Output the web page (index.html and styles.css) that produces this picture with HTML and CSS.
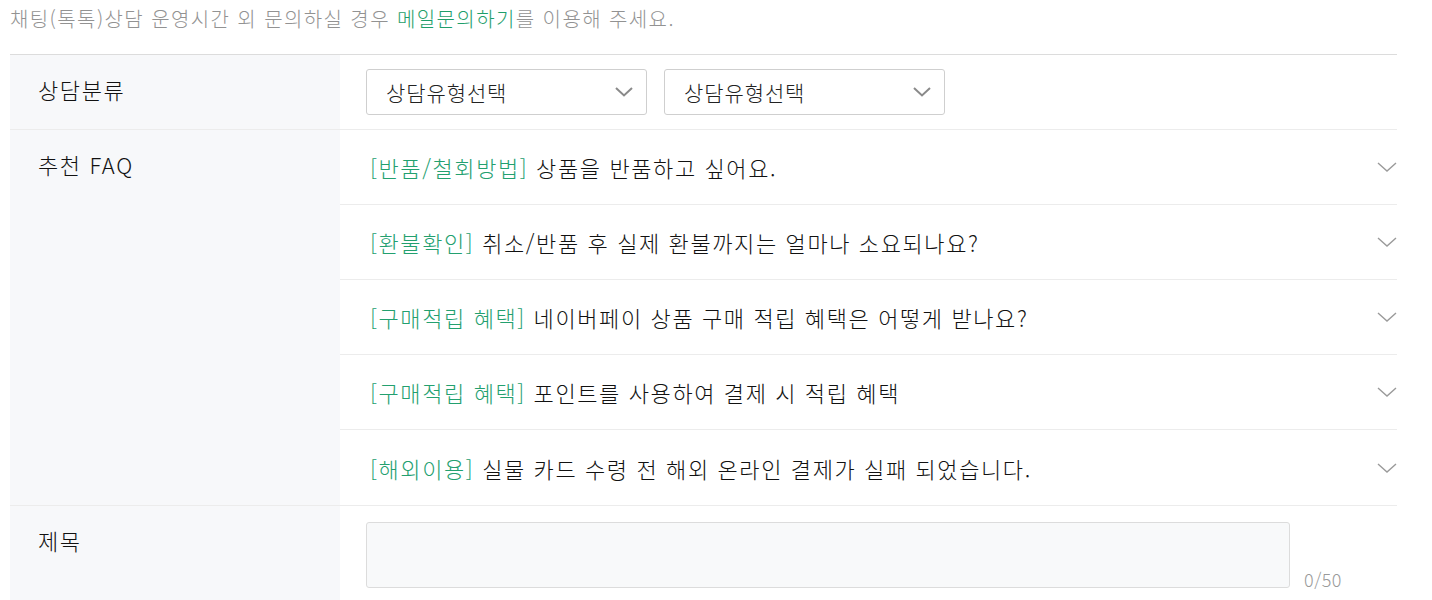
FILE: index.html
```html
<!DOCTYPE html>
<html lang="ko">
<head>
<meta charset="utf-8">
<link rel="stylesheet" href="styles.css">
</head>
<body>
<p class="notice">채팅(톡톡)상담 운영시간 외 문의하실 경우 <a class="link">메일문의하기</a>를 이용해 주세요.</p>
<div class="form">
  <div class="row">
    <div class="label">상담분류</div>
    <div class="field selects">
      <div class="select"><span>상담유형선택</span><svg class="sel-chev" viewBox="0 0 18 10" width="18" height="10"><path d="M1 1 L9 8.5 L17 1" fill="none" stroke="#8a8a8a" stroke-width="2"/></svg></div>
      <div class="select"><span>상담유형선택</span><svg class="sel-chev" viewBox="0 0 18 10" width="18" height="10"><path d="M1 1 L9 8.5 L17 1" fill="none" stroke="#8a8a8a" stroke-width="2"/></svg></div>
    </div>
  </div>
  <div class="row">
    <div class="label">추천 FAQ</div>
    <ul class="faq">
      <li><span class="q"><span class="tag">[반품/철회방법]</span> 상품을 반품하고 싶어요.</span><svg class="chev" viewBox="0 0 20 10" width="20" height="10"><path d="M1 1 L10 9 L19 1" fill="none" stroke="#9a9a9a" stroke-width="1.4"/></svg></li>
      <li><span class="q"><span class="tag">[환불확인]</span> 취소/반품 후 실제 환불까지는 얼마나 소요되나요?</span><svg class="chev" viewBox="0 0 20 10" width="20" height="10"><path d="M1 1 L10 9 L19 1" fill="none" stroke="#9a9a9a" stroke-width="1.4"/></svg></li>
      <li><span class="q"><span class="tag">[구매적립 혜택]</span> 네이버페이 상품 구매 적립 혜택은 어떻게 받나요?</span><svg class="chev" viewBox="0 0 20 10" width="20" height="10"><path d="M1 1 L10 9 L19 1" fill="none" stroke="#9a9a9a" stroke-width="1.4"/></svg></li>
      <li><span class="q"><span class="tag">[구매적립 혜택]</span> 포인트를 사용하여 결제 시 적립 혜택</span><svg class="chev" viewBox="0 0 20 10" width="20" height="10"><path d="M1 1 L10 9 L19 1" fill="none" stroke="#9a9a9a" stroke-width="1.4"/></svg></li>
      <li><span class="q"><span class="tag">[해외이용]</span> 실물 카드 수령 전 해외 온라인 결제가 실패 되었습니다.</span><svg class="chev" viewBox="0 0 20 10" width="20" height="10"><path d="M1 1 L10 9 L19 1" fill="none" stroke="#9a9a9a" stroke-width="1.4"/></svg></li>
    </ul>
  </div>
  <div class="row">
    <div class="label">제목</div>
    <div class="field title">
      <div class="input"></div>
      <span class="count">0/50</span>
    </div>
  </div>
</div>
</body>
</html>
```
FILE: styles.css
```css
* { box-sizing: border-box; }
body {
  margin: 0;
  font-family: "Noto Sans CJK KR", "Noto Sans", sans-serif;
  font-weight: 300;
  color: #111;
  background: #fff;
}
.notice {
  margin: 0;
  padding: 5px 10px 0;
  height: 54px;
  font-size: 20px;
  line-height: 28px;
  color: #929292;
  letter-spacing: 1.4px;
}
.link { color: #1e9e6a; }
.form {
  width: 1387px;
  margin-left: 10px;
  border-top: 1px solid #dcdcdc;
}
.row {
  display: grid;
  grid-template-columns: 330px 1fr;
  border-bottom: 1px solid #ececec;
}
.label {
  background: #f7f8fa;
  padding: 19px 28px;
  font-size: 22px;
  line-height: 30px;
  color: #111;
  letter-spacing: 1.6px;
}
.selects {
  display: flex;
  gap: 17px;
  padding: 14px 26px;
}
.select {
  width: 281px;
  height: 46px;
  border: 1px solid #cfcfcf;
  border-radius: 3px;
  display: flex;
  align-items: center;
  justify-content: space-between;
  padding: 0 13px 0 19px;
  font-size: 21px;
  color: #222;
  letter-spacing: 0.9px;
}
.faq {
  list-style: none;
  margin: 0;
  padding: 0;
}
.faq li {
  height: 75px;
  display: flex;
  align-items: center;
  justify-content: space-between;
  padding-left: 30px;
  padding-right: 0;
  border-bottom: 1px solid #ececec;
  font-size: 22px;
  letter-spacing: 1.6px;
}
.faq li:last-child { border-bottom: none; }
.tag { color: #23a06f; }
.title {
  display: flex;
  align-items: flex-end;
  padding: 16px 0 12px 26px;
  gap: 14px;
}
.input {
  width: 924px;
  height: 66px;
  background: #f8f9fa;
  border: 1px solid #dcdcdc;
  border-radius: 3px;
}
.count {
  font-size: 18px;
  color: #9a9a9a;
  line-height: 22px;
  margin-bottom: -2px;
  letter-spacing: 0.5px;
}
```
